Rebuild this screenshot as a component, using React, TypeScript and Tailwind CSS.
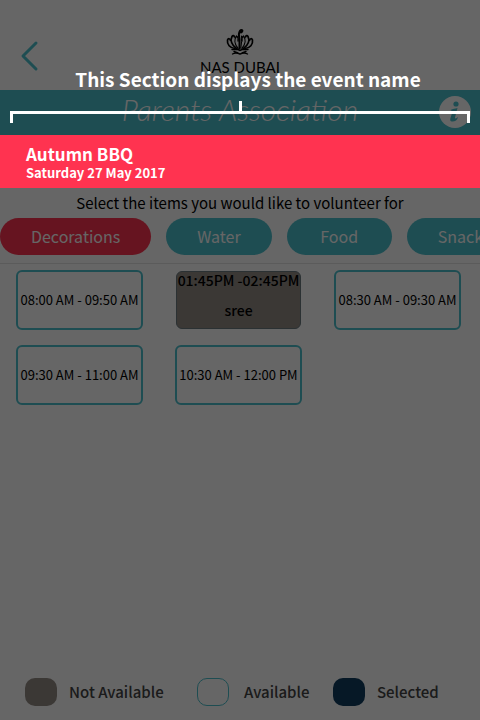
import type { ReactNode } from "react";

const categories = ["Decorations", "Water", "Food", "Snacks"];

type Slot = { time: string; takenBy?: string };

const slots: Slot[] = [
  { time: "08:00 AM - 09:50 AM" },
  { time: "01:45PM -02:45PM", takenBy: "sree" },
  { time: "08:30 AM - 09:30 AM" },
  { time: "09:30 AM - 11:00 AM" },
  { time: "10:30 AM - 12:00 PM" },
];

function Crest() {
  return (
    <svg viewBox="0 0 28 27" className="h-[27px] w-7" fill="none" stroke="#000" strokeWidth="1.3" strokeLinecap="round" aria-hidden="true">
      <path d="M13.500 19.500V11c0-3-1-4-.5-6.500S14 1 15.500 1s1 2-.5 2.500" strokeWidth="2" />
      <path d="M15.500 7c.8 3-.2 8-.7 12" strokeWidth="1" />
      <path d="M12 19.500C8.500 15 8 10 10.500 7c1.500 1 2 3 1.500 5M16 19.500c3.500-4.500 4-9.500 1.500-12.500-1.500 1-2 3-1.500 5" />
      <path d="M10.500 19.500C5.500 16 4 11 6 7.500 6.800 6.200 8 6.500 8.500 8M17.500 19.500c5-3.500 6.500-8.500 4.500-12-.8-1.300-2-1-2.500.5" strokeWidth="1.700" />
      <path d="M9 19.500C4 19 .8 15.500 1.500 11c.8-2 2.500-1.500 3 .5M19 19.500c5-.5 8.200-4 7.500-8.500-.8-2-2.500-1.500-3 .5" strokeWidth="1.700" />
      <path d="M6 20.500h6l2 1 2-1h6M8 22.500l4 1.500M20 22.500 16 24M6.500 25c2.500-1.500 5-1 7.500 0 2.500-1 5-1.500 7.500 0" strokeWidth="1.400" />
    </svg>
  );
}

function LegendItem({ swatch, children }: { swatch: string; children: ReactNode }) {
  return (
    <li className="flex items-center gap-3">
      <span className={`h-7 w-8 rounded-[10px] ${swatch}`} />
      {children}
    </li>
  );
}

export default function App() {
  return (
    <div className="relative flex min-h-screen flex-col overflow-hidden bg-white font-['Noto_Sans_CJK_SC','Noto_Sans',sans-serif] text-black">
      <header>
        <div className="grid h-[90px] grid-cols-3 px-5">
          <button type="button" aria-label="Back" className="mt-10 h-8 w-5">
            <svg viewBox="0 0 20 32" className="h-8 w-5" fill="none" stroke="#4dc0cd" strokeWidth="3" strokeLinecap="round" strokeLinejoin="round">
              <path d="M16 3 3 16l13 13" />
            </svg>
          </button>
          <div className="flex flex-col items-center pt-[29px]">
            <Crest />
            <span className="font-[Lato,sans-serif] text-[15px] leading-[22px] whitespace-nowrap">NAS DUBAI</span>
          </div>
        </div>
        <div className="grid h-[45px] grid-cols-[1fr_auto_1fr] items-center bg-[#4dc0cd] px-2">
          <h1 className="col-start-2 pb-2 font-[Lato,sans-serif] text-[30px] leading-8 font-light text-white italic">Parents Association</h1>
          <button type="button" aria-label="Information" className="justify-self-end">
            <svg viewBox="0 0 34 34" className="size-[34px]">
              <circle cx="17" cy="16" r="16" fill="#fff" />
              <circle cx="18" cy="8" r="2.600" fill="#4dc0cd" />
              <path d="M12.500 14c2.500-1 4.500-1.500 7-2l-2.500 9.500c-.3 1.500 1.500 1 3-.5-.5 3-3 4.500-5.500 4.500s-2.500-1.500-2-3.500l2-6.500z" fill="#4dc0cd" />
            </svg>
          </button>
        </div>
      </header>

      <section className="relative z-20 flex h-[53px] flex-col bg-[#ff3350] px-[26px] pt-[7px] font-bold text-white">
        <h2 className="text-[17px] leading-[23px]">Autumn BBQ</h2>
        <p className="text-[13px] leading-4">Saturday 27 May 2017</p>
      </section>

      <main>
        <p className="text-center text-[15px] leading-[30px]">Select the items you would like to volunteer for</p>
        <nav className="flex gap-[15px] overflow-hidden border-b border-[#e4e4e4] pb-2">
          {categories.map((name, i) => (
            <button
              key={name}
              type="button"
              className={`h-[37px] min-w-[105px] shrink-0 rounded-full px-[31px] pb-[2px] text-base text-white ${i === 0 ? "bg-[#ff3350]" : "bg-[#4dc0cd]"}`}
            >
              {name}
            </button>
          ))}
        </nav>
        <div className="grid grid-cols-3 gap-x-8 gap-y-[15px] pt-[6px] pr-[19px] pl-4">
          {slots.map((slot) =>
            slot.takenBy ? (
              <button
                key={slot.time}
                type="button"
                disabled
                className="m-px flex h-[58px] flex-col items-center rounded-md border border-[#6b7a80] bg-[#948c86] text-sm font-medium whitespace-nowrap"
              >
                <span className="leading-4">{slot.time}</span>
                <span className="mt-3.5 leading-4">{slot.takenBy}</span>
              </button>
            ) : (
              <button
                key={slot.time}
                type="button"
                className="h-[60px] rounded-md border-2 border-[#4dc0cd] text-[13px] whitespace-nowrap"
              >
                {slot.time}
              </button>
            ),
          )}
        </div>
      </main>

      <footer className="mt-auto px-[25px] pb-[14px]">
        <ul className="grid grid-cols-[172fr_136fr_122fr] text-[15px] leading-7 font-medium text-[#444]">
          <LegendItem swatch="bg-[#948c86]">Not Available</LegendItem>
          <LegendItem swatch="mr-[3px] border border-[#4dc0cd]">Available</LegendItem>
          <LegendItem swatch="bg-[#0f3c5f]">Selected</LegendItem>
        </ul>
      </footer>

      <div className="absolute inset-0 z-10 bg-black/60">
        <div className="px-[10px] pt-16 text-white">
          <p className="pl-4 text-center text-[19px] leading-[30px] font-bold">This Section displays the event name</p>
          <div className="mx-auto mt-[7px] h-[10px] w-[3px] bg-white" />
          <div className="h-3 border-x-[3px] border-t-[3px] border-white" />
        </div>
      </div>
    </div>
  );
}
